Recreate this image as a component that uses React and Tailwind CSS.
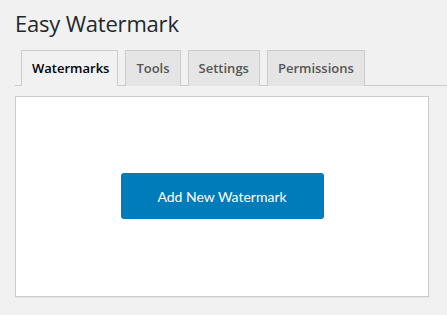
import React from "react"

const tabs = ["Watermarks", "Tools", "Settings", "Permissions"]

export default function App() {
  return (
    <div className="min-h-[315px] bg-[#f1f1f1] pl-[15px] pr-0 text-[#23282d] [font-family:'Open_Sans',Roboto,'Liberation_Sans',sans-serif]">
      <h1 className="pt-[9px] pb-[4px] text-[22px] leading-[1.3] font-normal tracking-[-0.2px] text-[#23282d]">Easy Watermark</h1>

      {/* tabs */}
      <div className="flex border-b border-[#ccc] pt-[8px]">
        {tabs.map((t, i) => (
          <a
            key={t}
            className={`mb-[-1px] border border-b-0 border-[#ccc] px-[10px] py-[5px] text-[13px] leading-[25px] font-semibold ${
              i === 0 ? "ml-[6px] bg-[#f1f1f1] text-black border-b border-b-[#f1f1f1] pr-[8px]" : "ml-[7px] bg-[#e5e5e5] text-[#555]"
            }`}
          >
            {t}
          </a>
        ))}
      </div>

      {/* content box */}
      <div className="mt-[10px] mr-[18px] h-[201px] flex items-center justify-center border border-[#ccc] bg-white shadow-[0_1px_1px_rgba(0,0,0,0.04)]">
        <button className="w-[203px] h-[46px] rounded-[3px] bg-[#007cba] text-white text-[14px] font-normal [font-family:Lato,'Open_Sans',sans-serif]">
          Add New Watermark
        </button>
      </div>
    </div>
  )
}
